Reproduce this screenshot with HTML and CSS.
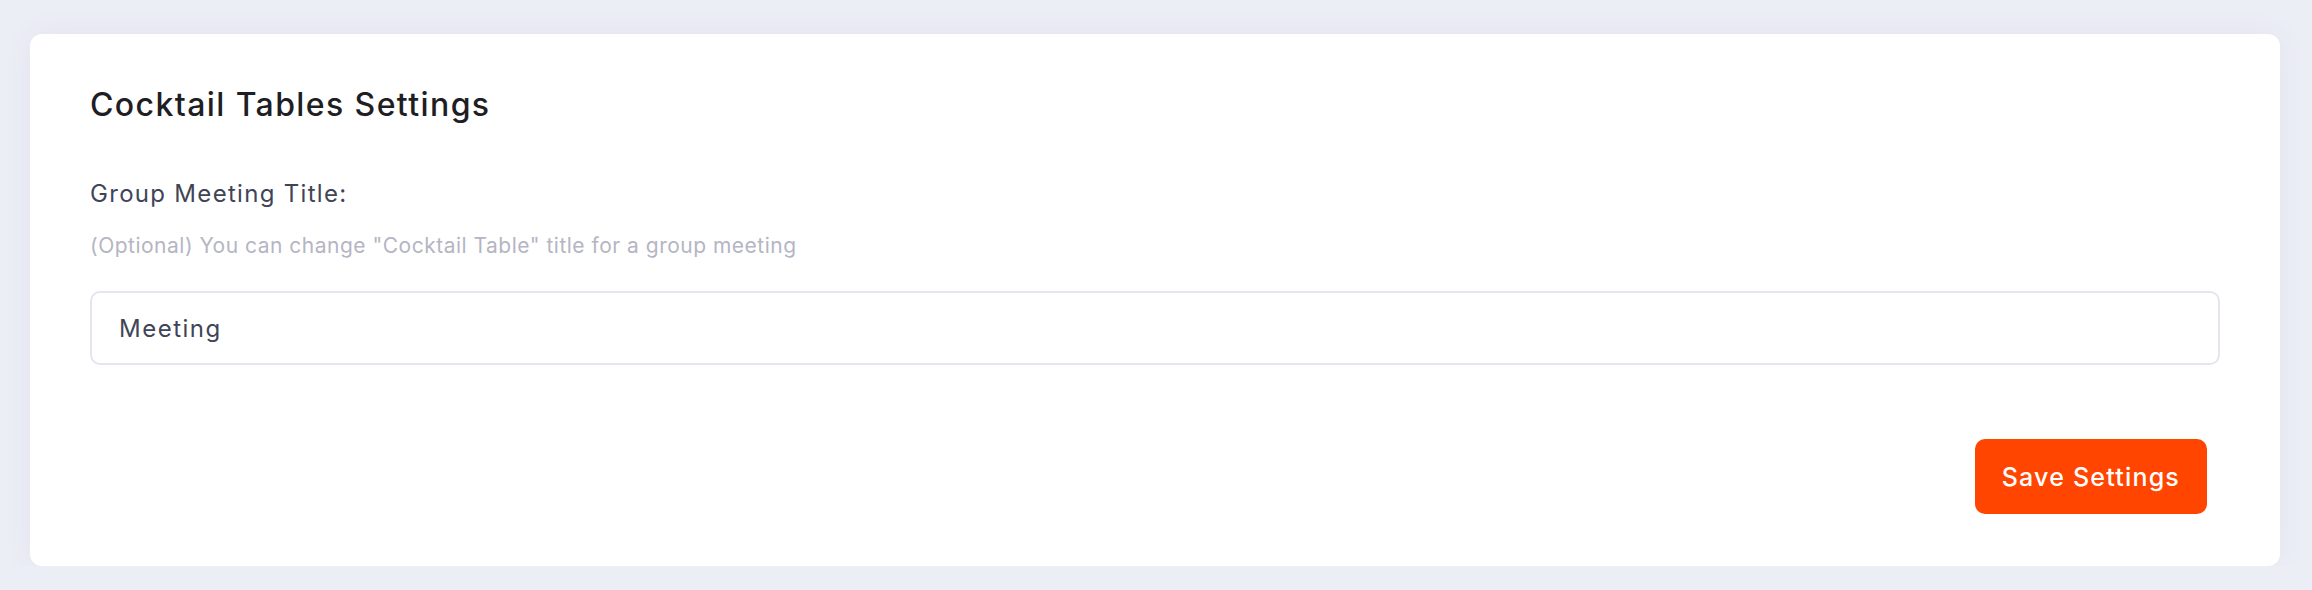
FILE: index.html
```html
<!DOCTYPE html>
<html lang="en">
<head>
  <meta charset="UTF-8">
  <title>Cocktail Tables Settings</title>
  <link rel="stylesheet" href="styles.css">
</head>
<body>
  <div class="card">
    <h3 class="card-title">Cocktail Tables Settings</h3>
    <form class="settings-form" onsubmit="return false">
      <label class="field-label" for="meetingTitle">Group Meeting Title:</label>
      <p class="field-hint">(Optional) You can change "Cocktail Table" title for a group meeting</p>
      <input class="field-input" id="meetingTitle" type="text" value="Meeting">
      <div class="form-actions">
        <button class="btn-save" type="submit">Save Settings</button>
      </div>
    </form>
  </div>
</body>
</html>
```

FILE: styles.css
```css
body {
  margin: 0;
  padding: 34px 32px 0 30px;
  background-color: #eceef6;
  font-family: Inter, "Open Sans", sans-serif;
}

.card {
  background: #fff;
  border-radius: 12px;
  padding: 48px 60px 52px;
  box-shadow: 0 0 30px 0 rgba(82, 63, 105, 0.06);
}

.card-title {
  margin: 0;
  font-size: 32px;
  line-height: 46px;
  letter-spacing: 1.4px;
  font-weight: 500;
  color: #1e1e24;
}

.settings-form {
  margin-top: 48px;
}

.field-label {
  display: block;
  font-size: 24px;
  line-height: 36px;
  letter-spacing: 1.3px;
  color: #3f4557;
}

.field-hint {
  margin: 18px 0 0;
  font-size: 21px;
  line-height: 32px;
  letter-spacing: 0.5px;
  color: #b5b5c3;
}

.field-input {
  display: block;
  box-sizing: border-box;
  width: 100%;
  height: 74px;
  margin-top: 29px;
  padding: 0 27px;
  border: 2px solid #e4e6ef;
  border-radius: 10px;
  font-family: inherit;
  font-size: 24px;
  letter-spacing: 1.5px;
  color: #3f4557;
  outline: none;
}

.form-actions {
  display: flex;
  justify-content: flex-end;
  margin-top: 74px;
  padding-right: 13px;
}

.btn-save {
  height: 75px;
  padding: 0 27px;
  border: none;
  border-radius: 10px;
  background-color: #ff4500;
  color: #fff;
  font-family: inherit;
  font-size: 25px;
  font-weight: 500;
  letter-spacing: 1.2px;
  cursor: pointer;
}
```
